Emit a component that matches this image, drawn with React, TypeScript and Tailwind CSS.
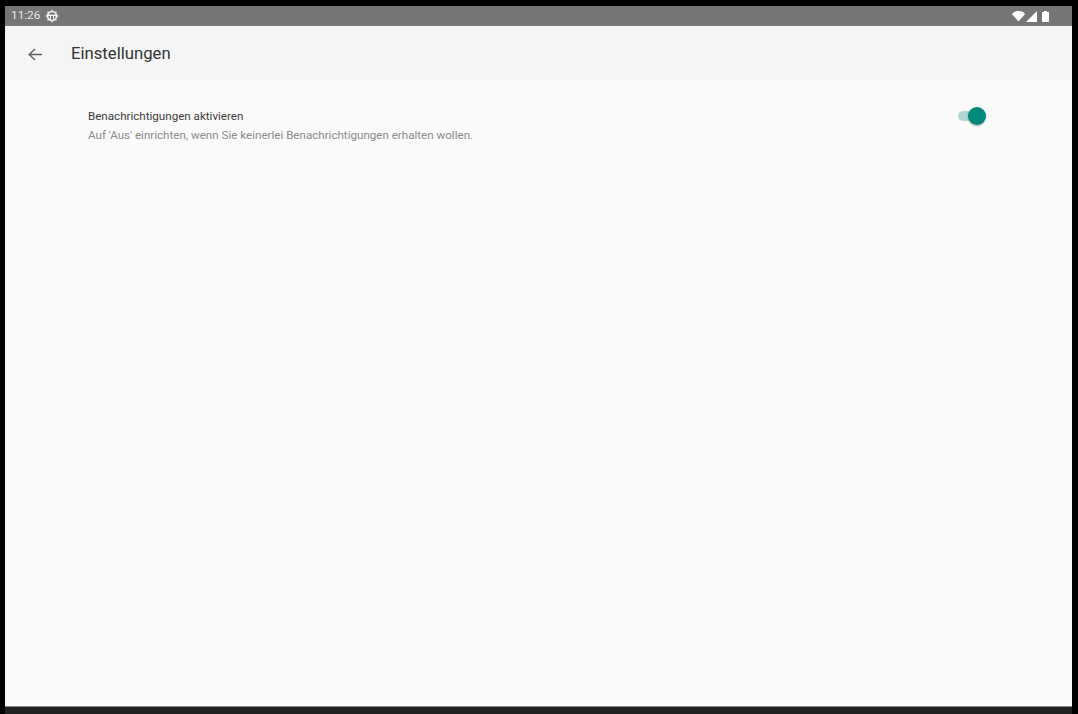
const font = { fontFamily: "Roboto, sans-serif" };

function GearIcon() {
  return (
    <svg width="14" height="14" viewBox="0 0 14 14" fill="none" stroke="#f2f2f2">
      <circle cx="7" cy="7" r="4.500" strokeWidth="1.700" />
      <path d="M2.800 6.300h8.400" strokeWidth="1.500" />
      <path d="M5.500 7v3.500M8.500 7v3.500" strokeWidth="1" />
      <path d="M7 0.800v1.600M7 11.600v1.600M0.800 7h1.600M11.600 7h1.600M2.600 2.600l1.100 1.100M10.300 10.300l1.100 1.100M2.600 11.400l1.100-1.100M10.300 3.700l1.100-1.100" strokeWidth="1.300" />
    </svg>
  );
}

function StatusIcons() {
  return (
    <div className="flex items-center">
      <svg width="13" height="11" viewBox="0 0 13 11" fill="#fff">
        <path d="M0 3.200C0.800 1.200 3.400 0 6.500 0s5.700 1.200 6.500 3.200L6.500 10.500z" />
      </svg>
      <svg className="ml-[1px]" width="11" height="11" viewBox="0 0 11 11" fill="#fff">
        <path d="M11 0v11H0z" />
      </svg>
      <svg className="ml-[5px]" width="7" height="11" viewBox="0 0 7 11" fill="#fff">
        <path d="M2 0h3v1h1.200a.8.8 0 0 1 .8.8v8.400a.8.8 0 0 1-.8.8H.8a.8.8 0 0 1-.8-.8V1.800A.8.8 0 0 1 .8 1H2z" />
      </svg>
    </div>
  );
}

export default function App() {
  return (
    <div className="flex h-[714px] w-[1078px] flex-col overflow-hidden bg-black pt-[6px] pl-[5px] pr-[6px]" style={font}>
      <div className="flex h-[20px] items-center justify-between bg-[#757575] pl-[6px] pr-[23px]">
        <div className="flex items-center gap-[5px]">
          <span className="text-[11.800px] text-[#e8e8e8]">11:26</span>
          <GearIcon />
        </div>
        <StatusIcons />
      </div>

      <div className="flex h-[54px] items-center bg-[#f5f5f5] pt-[2px]">
        <svg className="ml-[23px]" width="14" height="13" viewBox="0 0 14 13" fill="none" stroke="#616161" strokeWidth="1.400">
          <path d="M14 6.500H1.500M7 1L1.200 6.500L7 12" />
        </svg>
        <span className="ml-[29px] text-[16.700px] text-[#333333]">Einstellungen</span>
      </div>

      <div className="flex flex-1 items-start justify-between bg-[#fafafa] pl-[83px] pr-[86px] pt-[29px]">
        <div>
          <div className="text-[11.600px] leading-[15px] text-[#3a3a3a]">Benachrichtigungen aktivieren</div>
          <div className="mt-[4px] text-[11.600px] leading-[14px] text-[#8a8a8a]">
            Auf 'Aus' einrichten, wenn Sie keinerlei Benachrichtigungen erhalten wollen.
          </div>
        </div>
        <div className="relative mt-[-2px] h-[18px] w-[29px]">
          <div className="absolute left-[1px] top-[4px] h-[10px] w-[23px] rounded-full bg-[#b2d8d4]" />
          <div className="absolute right-0 top-0 h-[18px] w-[18px] rounded-full bg-[#00897b] shadow-[0_1px_2px_rgba(0,0,0,0.3)]" />
        </div>
      </div>

      <div className="h-[8px] border-t border-[#858585] bg-[#212121]" />
    </div>
  );
}
